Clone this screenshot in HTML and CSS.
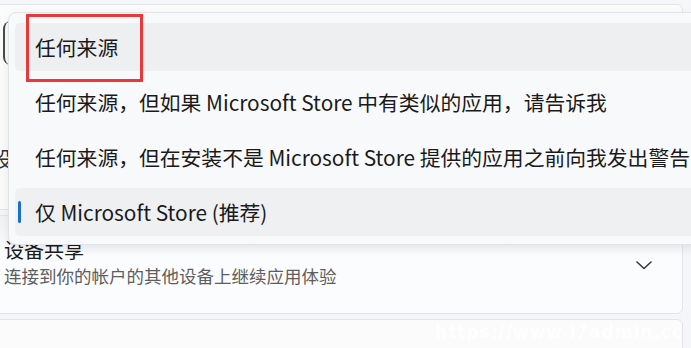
FILE: index.html
```html
<!DOCTYPE html>
<html lang="zh-CN">
<head>
<meta charset="utf-8">
<link rel="stylesheet" href="styles.css">
</head>
<body>
<div class="page">
  <div class="list">
    <div class="card card-top">
      <span class="edge-glyph"></span>
      <span class="peek">设</span>
    </div>
    <div class="card card-share">
      <div class="card-text">
        <div class="card-title">设备共享</div>
        <div class="card-sub">连接到你的帐户的其他设备上继续应用体验</div>
      </div>
      <svg class="chev" width="18" height="12" viewBox="0 0 18 12"><path d="M2 3 L9 9.5 L16 3" fill="none" stroke="#3a3a3a" stroke-width="1.6" stroke-linecap="round" stroke-linejoin="round"/></svg>
    </div>
    <div class="card card-next"></div>
  </div>

  <div class="menu">
    <div class="item hover">任何来源</div>
    <div class="item">任何来源，但如果 Microsoft Store 中有类似的应用，请告诉我</div>
    <div class="item">任何来源，但在安装不是 Microsoft Store 提供的应用之前向我发出警告</div>
    <div class="item selected"><span class="accent"></span>仅 Microsoft Store (推荐)</div>
  </div>

  <div class="annot"></div>
  <div class="watermark">https://www.i7admin.cc</div>
</div>
</body>
</html>
```

FILE: styles.css
```css
html, body {
  margin: 0;
  padding: 0;
}
body {
  width: 691px;
  height: 348px;
  overflow: hidden;
  background: #f4f6f9;
  font-family: "Microsoft YaHei", "Noto Sans CJK SC", "Noto Sans", sans-serif;
  color: #1b1b1b;
}
.page {
  position: relative;
  width: 691px;
  height: 348px;
  overflow: hidden;
}
.list {
  display: flex;
  flex-direction: column;
  gap: 5px;
  padding: 4px 8px 0 0;
  margin-left: -6px;
}
.card {
  background: #fbfbfc;
  border: 1px solid #e3e4e7;
  border-radius: 6px;
  box-sizing: border-box;
}
.card-top {
  height: 206px;
  position: relative;
  display: flex;
  align-items: center;
}
.edge-glyph {
  position: absolute;
  left: 8px;
  top: 16px;
  width: 8px;
  height: 44px;
  border-left: 2px solid #4a4a4a;
  border-radius: 8px 0 0 8px;
}
.peek {
  position: absolute;
  left: -3px;
  top: 139px;
  font-size: 20px;
  color: #333;
}
.card-share {
  height: 99px;
  display: flex;
  align-items: center;
  justify-content: space-between;
  padding: 0 29px 0 9px;
  background: linear-gradient(#f1f2f4, #fbfcfd 40%, #fbfcfd);
}
.card-text {
  display: flex;
  flex-direction: column;
  gap: 2px;
  margin-top: -4px;
}
.card-title {
  font-size: 20px;
  line-height: 24px;
  color: #1b1b1b;
}
.card-sub {
  font-size: 17.5px;
  line-height: 24px;
  color: #5e5e5e;
}
.chev {
  display: block;
}
.card-next {
  height: 60px;
}
.menu {
  position: absolute;
  left: 8px;
  top: 12px;
  width: 700px;
  height: 233px;
  box-sizing: border-box;
  padding: 10px 0 0 6px;
  background: #f8f9fb;
  border: 1px solid #e2e3e6;
  border-radius: 8px;
  box-shadow: 0 4px 10px rgba(0, 0, 0, 0.08);
  display: flex;
  flex-direction: column;
  gap: 7px;
}
.item {
  position: relative;
  height: 48px;
  display: flex;
  align-items: center;
  padding-left: 20px;
  font-size: 20.8px;
  white-space: nowrap;
  border-radius: 5px;
  color: #1a1a1a;
}
.item.hover {
  background: #eeeff1;
}
.item.selected {
  background: #eef0f2;
}
.accent {
  position: absolute;
  left: 3px;
  top: 13px;
  width: 3px;
  height: 22px;
  border-radius: 2px;
  background: #1c6fc7;
}
.annot {
  position: absolute;
  left: 26px;
  top: 14px;
  width: 117px;
  height: 68px;
  box-sizing: border-box;
  border: 3px solid #e8383a;
}
.watermark {
  position: absolute;
  right: 8px;
  bottom: 6px;
  font-family: "DejaVu Sans", sans-serif;
  font-weight: bold;
  font-size: 17px;
  letter-spacing: 1px;
  color: rgba(255, 255, 255, 0.9);
}
```
